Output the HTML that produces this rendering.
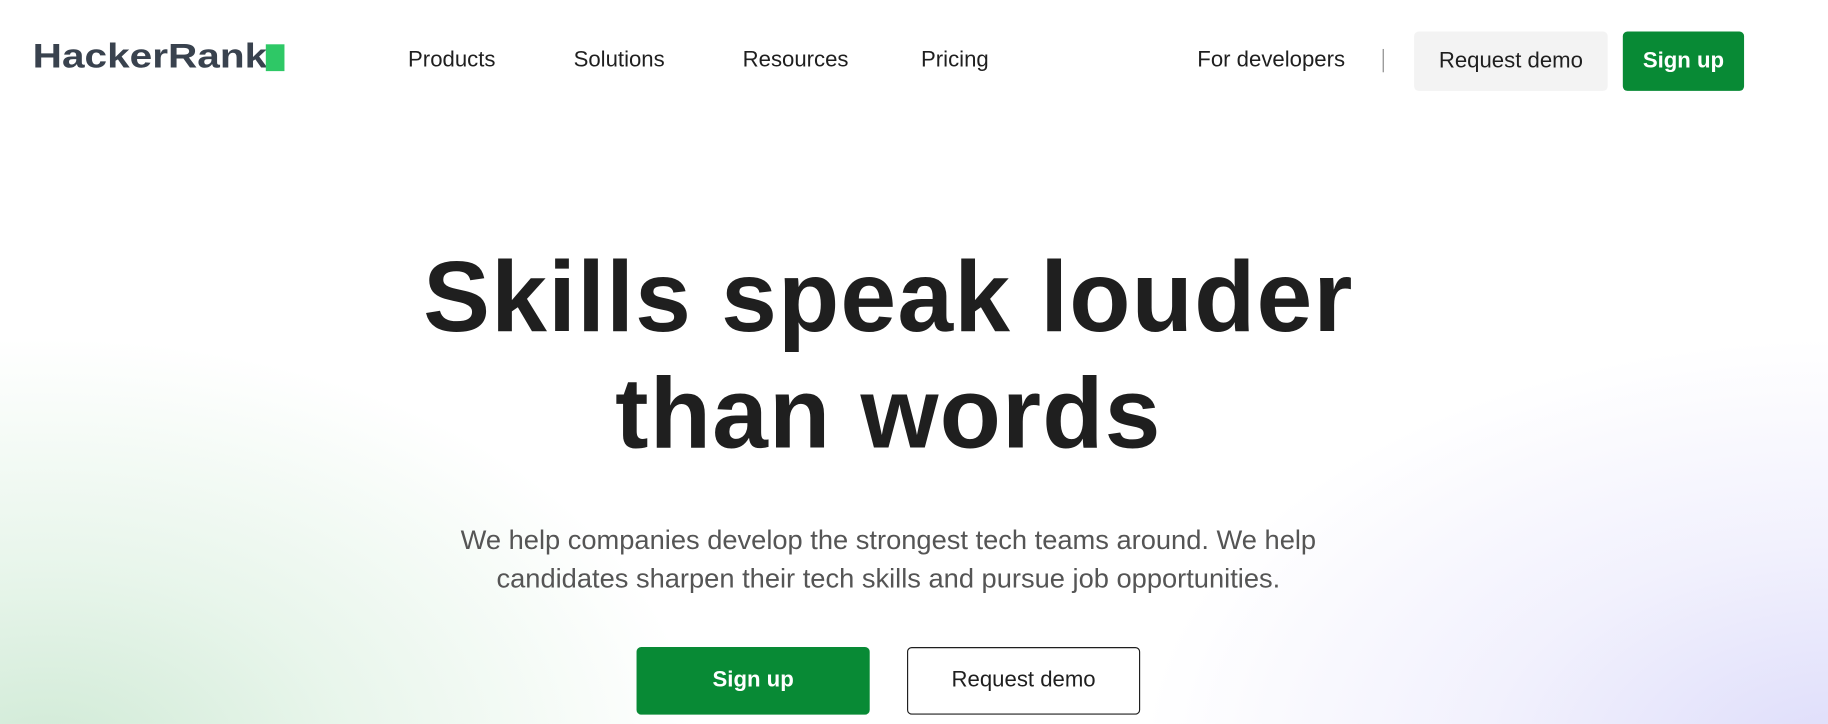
<!DOCTYPE html>
<html><head><meta charset="utf-8"><style>
html,body{margin:0;padding:0;width:1828px;height:724px;overflow:hidden;background:#fff}
#w{position:absolute;left:0;top:0;width:1568px;height:621px;transform:scale(1.16582);transform-origin:0 0;font-family:"Liberation Sans",sans-serif;color:#1f1f1f;
background:radial-gradient(ellipse 560px 360px at 40px 650px,#d0ead6 0%,rgba(224,242,228,.75) 45%,rgba(255,255,255,0) 100%),radial-gradient(ellipse 600px 360px at 1580px 650px,#dddcfa 0%,rgba(234,233,252,.65) 50%,rgba(255,255,255,0) 100%),#fff}
.a{position:absolute;white-space:nowrap}
.nav{top:41px;font-size:19px;color:#1f1f1f}
.logo{left:28px;top:33px;font-size:29px;font-weight:bold;color:#39424e;transform:scaleX(1.2);transform-origin:0 0}
.btn{position:absolute;border-radius:4px;display:flex;align-items:center;justify-content:center;font-size:19px;box-sizing:border-box}
h1{position:absolute;left:0;width:1524px;top:205px;margin:0;text-align:center;font-size:86px;line-height:100px;font-weight:bold;color:#1f1f1f;letter-spacing:1px}
.sub{position:absolute;left:0;width:1524px;top:447px;text-align:center;font-size:23.4px;line-height:33px;color:#555;font-weight:300}
</style></head><body><div id="w">
<div class="a logo">HackerRank</div>
<div class="a" style="left:228px;top:38px;width:16px;height:23px;background:#2ec866"></div>
<div class="a nav" style="left:350px">Products</div>
<div class="a nav" style="left:492px">Solutions</div>
<div class="a nav" style="left:637px">Resources</div>
<div class="a nav" style="left:790px">Pricing</div>
<div class="a nav" style="left:1027px">For developers</div>
<div class="a" style="left:1186px;top:42px;width:1px;height:20px;background:#888"></div>
<div class="btn" style="left:1213px;top:27px;width:166px;height:51px;background:#f3f3f3;color:#1f1f1f">Request demo</div>
<div class="btn" style="left:1392px;top:27px;width:104px;height:51px;background:#088a35;color:#fff;font-weight:bold">Sign up</div>
<h1>Skills speak louder<br>than words</h1>
<div class="sub">We help companies develop the strongest tech teams around. We help<br>candidates sharpen their tech skills and pursue job opportunities.</div>
<div class="btn" style="left:546px;top:555px;width:200px;height:58px;background:#088a35;color:#fff;font-weight:bold">Sign up</div>
<div class="btn" style="left:778px;top:555px;width:200px;height:58px;border:1px solid #1f1f1f;background:#fff;color:#1f1f1f">Request demo</div>
</div></body></html>
